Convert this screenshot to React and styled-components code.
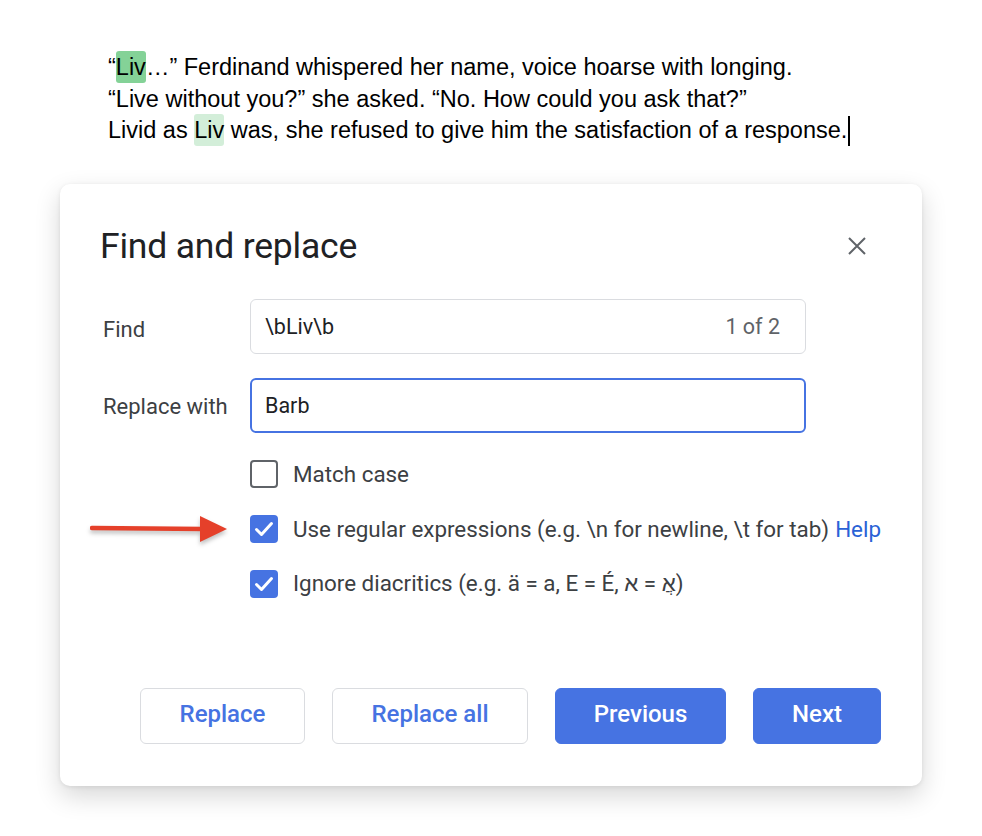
import React from 'react';
import styled, { createGlobalStyle } from 'styled-components';

const Blue = '#4673e2';
const Ink = '#3c4043';

const GlobalStyle = createGlobalStyle`
  html, body {
    margin: 0;
    padding: 0;
    background: #ffffff;
  }
  body {
    font-family: Roboto, 'Liberation Sans', Arial, sans-serif;
  }
`;

const Page = styled.div`
  width: 982px;
  height: 836px;
  overflow: hidden;
  padding-top: 52px;
  box-sizing: border-box;
`;

const Passage = styled.div`
  margin-left: 108px;
  font-family: 'Liberation Sans', Arial, sans-serif;
  font-size: 23.5px;
  line-height: 31.5px;
  color: #000;
`;

const Line = styled.div`
  white-space: nowrap;
`;

const Match = styled.span`
  background: ${(p) => (p.current ? '#84d297' : '#d3eed9')};
  border-radius: 3px;
  padding: 3px 0;
`;

const Caret = styled.span`
  display: inline-block;
  width: 2px;
  height: 30px;
  background: #000;
  vertical-align: -8px;
  margin-left: 1px;
`;

const Dialog = styled.section`
  position: relative;
  margin: 37px 0 0 60px;
  width: 862px;
  height: 602px;
  box-sizing: border-box;
  padding: 42px 41px 42px 40px;
  background: #fff;
  border-radius: 10px;
  box-shadow: 0 10px 26px rgba(0, 0, 0, 0.16), 0 1px 4px rgba(0, 0, 0, 0.08);
  display: flex;
  flex-direction: column;
`;

const Header = styled.header`
  display: flex;
  justify-content: space-between;
  align-items: center;
`;

const Title = styled.h1`
  margin: 0;
  font-size: 35.5px;
  line-height: 40px;
  font-weight: 400;
  color: #202124;
  letter-spacing: -0.2px;
`;

const Close = styled.button`
  border: 0;
  background: none;
  padding: 0;
  margin-right: 15px;
  width: 18px;
  height: 18px;
  display: flex;
  cursor: pointer;
`;

const Form = styled.div`
  margin-top: 33px;
  display: grid;
  grid-template-columns: 150px 556px;
  row-gap: 24px;
  align-items: center;
`;

const Label = styled.label`
  font-size: 22px;
  color: ${Ink};
  padding-left: 3px;
  padding-top: ${(p) => p.nudge || 0}px;
`;

const Field = styled.div`
  height: 55px;
  box-sizing: border-box;
  border: ${(p) => (p.focused ? `2px solid ${Blue}` : '1px solid #dadce0')};
  border-radius: 6px;
  padding: 0 ${(p) => (p.focused ? 24 : 25)}px 0 ${(p) => (p.focused ? 13 : 14)}px;
  display: flex;
  align-items: center;
  justify-content: space-between;
  font-size: 21.5px;
  color: #202124;
`;

const Count = styled.span`
  color: #5f6368;
`;

const Options = styled.div`
  margin: 27px 0 0 150px;
  display: flex;
  flex-direction: column;
  gap: 27px;
`;

const Option = styled.div`
  position: relative;
  display: flex;
  align-items: center;
  gap: 15px;
  font-size: 22.4px;
  color: ${Ink};
  white-space: nowrap;
`;

const Box = styled.span`
  width: 28px;
  height: 28px;
  box-sizing: border-box;
  border-radius: 4px;
  flex: none;
  display: flex;
  align-items: center;
  justify-content: center;
  background: ${(p) => (p.checked ? Blue : '#fff')};
  border: ${(p) => (p.checked ? 'none' : '2.5px solid #5f6368')};
`;

const Help = styled.a`
  color: #2a62d6;
  text-decoration: none;
  margin-left: 6px;
`;

const Arrow = styled.svg`
  position: absolute;
  right: calc(100% + 20px);
  top: 50%;
  transform: translateY(-50%);
  filter: drop-shadow(0 3px 2px rgba(0, 0, 0, 0.25));
`;

const Actions = styled.div`
  margin-top: auto;
  display: flex;
  justify-content: flex-end;
  gap: 27px;
`;

const Button = styled.button`
  height: 56px;
  width: ${(p) => p.w}px;
  box-sizing: border-box;
  border-radius: 6px;
  font-family: Roboto, 'Liberation Sans', Arial, sans-serif;
  font-size: 24px;
  font-weight: 500;
  padding: 0 0 3px;
  cursor: pointer;
  border: ${(p) => (p.primary ? `1px solid ${Blue}` : '1px solid #dadce0')};
  background: ${(p) => (p.primary ? Blue : '#fff')};
  color: ${(p) => (p.primary ? '#fff' : Blue)};
`;

const Check = () => (
  <svg width="20" height="16" viewBox="0 0 20 16">
    <path d="M2.5 8.5 L7.5 13.5 L17.5 2.5" fill="none" stroke="#fff" strokeWidth="3" strokeLinecap="round" strokeLinejoin="round" />
  </svg>
);

const CheckOption = ({ checked, children, arrow }) => (
  <Option>
    {arrow && (
      <Arrow width="140" height="34" viewBox="0 0 140 34">
        <path d="M2 16 L114 17" stroke="#e5402a" strokeWidth="4.5" strokeLinecap="round" />
        <polygon points="110,4 137,17 110,30" fill="#e5402a" />
      </Arrow>
    )}
    <Box checked={checked}>{checked && <Check />}</Box>
    {children}
  </Option>
);

export default function App() {
  return (
    <Page>
      <GlobalStyle />
      <Passage>
        <Line>
          “<Match current>Liv</Match>…” Ferdinand whispered her name, voice hoarse with longing.
        </Line>
        <Line>“Live without you?” she asked. “No. How could you ask that?”</Line>
        <Line>
          Livid as <Match>Liv</Match> was, she refused to give him the satisfaction of a response.
          <Caret />
        </Line>
      </Passage>

      <Dialog>
        <Header>
          <Title>Find and replace</Title>
          <Close aria-label="Close">
            <svg width="18" height="18" viewBox="0 0 18 18">
              <path d="M1 1 L17 17 M17 1 L1 17" stroke="#5f6368" strokeWidth="2" />
            </svg>
          </Close>
        </Header>

        <Form>
          <Label nudge={6}>Find</Label>
          <Field>
            <span>\bLiv\b</span>
            <Count>1 of 2</Count>
          </Field>
          <Label nudge={2}>Replace with</Label>
          <Field focused>
            <span>Barb</span>
          </Field>
        </Form>

        <Options>
          <CheckOption>Match case</CheckOption>
          <CheckOption checked arrow>
            <span>
              Use regular expressions (e.g. \n for newline, \t for tab)
              <Help href="#">Help</Help>
            </span>
          </CheckOption>
          <CheckOption checked>
            <span>
              Ignore diacritics (e.g. ä = a, E = É, <bdi>א</bdi> = <bdi>אֲ</bdi>)
            </span>
          </CheckOption>
        </Options>

        <Actions>
          <Button w={165}>Replace</Button>
          <Button w={196}>Replace all</Button>
          <Button primary w={171}>Previous</Button>
          <Button primary w={128}>Next</Button>
        </Actions>
      </Dialog>
    </Page>
  );
}
